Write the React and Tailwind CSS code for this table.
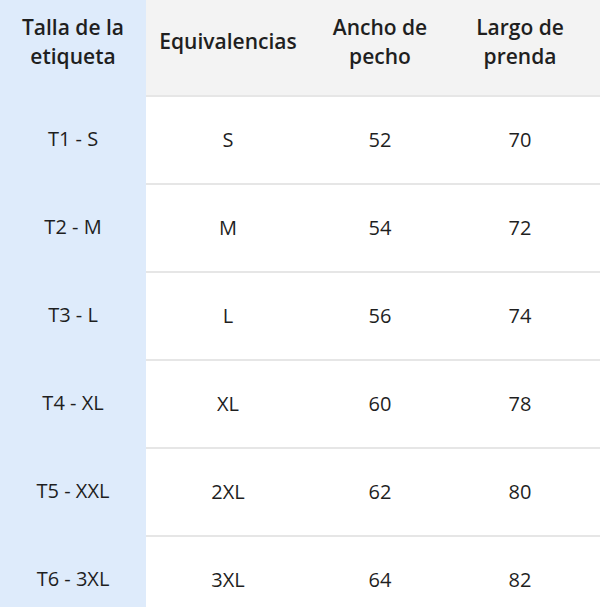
import React from 'react';

const rows = [
    ['T1 - S', 'S', '52', '70'],
    ['T2 - M', 'M', '54', '72'],
    ['T3 - L', 'L', '56', '74'],
    ['T4 - XL', 'XL', '60', '78'],
    ['T5 - XXL', '2XL', '62', '80'],
    ['T6 - 3XL', '3XL', '64', '82'],
];

const cols = 'grid grid-cols-[146px_164px_140px_140px_10px]';

const App = () => {
    return (
        <div
            className="w-[600px] h-[607px] overflow-hidden bg-white text-[#1f1f1f] text-[20px]"
            style={{fontFamily: '"Open Sans", "Liberation Sans", sans-serif'}}
        >
            <div className={`${cols} h-[95px] bg-[#f3f3f3] text-[21px] font-semibold leading-[29px] text-center`}>
                <div className="flex items-center justify-center pb-[12px] bg-[#deebfb]">
                    Talla de la<br />etiqueta
                </div>
                <div className="flex items-center justify-center pb-[12px]">Equivalencias</div>
                <div className="flex items-center justify-center pb-[12px]">
                    Ancho de<br />pecho
                </div>
                <div className="flex items-center justify-center pb-[12px]">
                    Largo de<br />prenda
                </div>
                <div></div>
            </div>
            {rows.map((r) => (
                <div key={r[0]} className={`${cols} h-[88px] text-center`}>
                    <div className="flex items-center justify-center bg-[#deebfb]">{r[0]}</div>
                    <div className="col-span-4 grid grid-cols-[164px_140px_140px_10px] border-t-2 border-[#e6e6e6]">
                        <div className="flex items-center justify-center">{r[1]}</div>
                        <div className="flex items-center justify-center">{r[2]}</div>
                        <div className="flex items-center justify-center">{r[3]}</div>
                        <div></div>
                    </div>
                </div>
            ))}
        </div>
    );
};

export default App;
